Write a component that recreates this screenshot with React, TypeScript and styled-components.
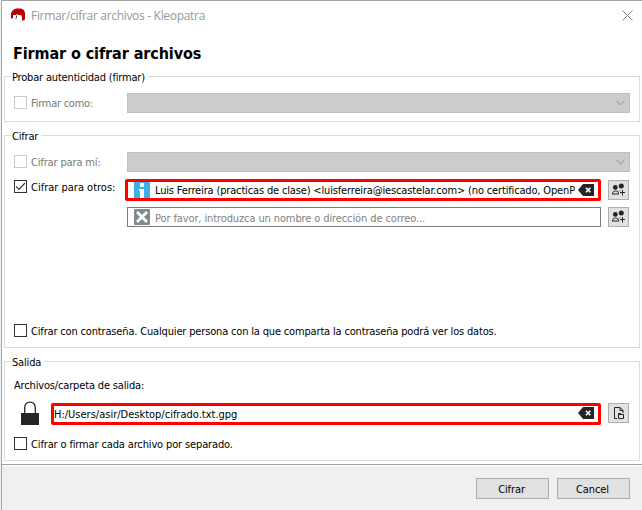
import React from "react";
import styled, { createGlobalStyle } from "styled-components";

const GlobalStyle = createGlobalStyle`
  * { box-sizing: border-box; }
  html, body { margin: 0; background: #f0f0f0; overflow: hidden; }
  svg { display: block; flex: none; }
`;

const Window = styled.div`
  width: 641px;
  height: 510px;
  margin-left: 1px;
  display: flex;
  flex-direction: column;
  background: #fff;
  border-top: 1px solid #a5a5a5;
  border-left: 1px solid #a5a5a5;
  font: 11px/13px "DejaVu Sans Condensed", "DejaVu Sans", sans-serif;
  color: #000;
  white-space: nowrap;
`;

const TitleBar = styled.header`
  height: 29px;
  padding: 0 9px;
  display: flex;
  align-items: center;
`;

const WindowTitle = styled.span`
  flex: 1;
  margin-left: 5px;
  font: 12px/16px "Open Sans", sans-serif;
  letter-spacing: -0.31px;
  color: #999;
`;

const Heading = styled.h1`
  height: 40px;
  margin: 0;
  padding: 14px 0 0 11px;
  font-size: 16px;
  line-height: 20px;
  font-weight: bold;
  letter-spacing: -0.1px;
`;

const Group = styled.fieldset<{ $height: number }>`
  width: 636px;
  height: ${(p) => p.$height}px;
  flex: none;
  margin: 0 0 7px 2px;
  padding: 0;
  border: 1px solid #dcdcdc;
`;

const Legend = styled.legend`
  height: 13px;
  margin-left: 6px;
  padding: 1px 3px 0 1px;
  letter-spacing: -0.18px;
`;

const Row = styled.div<{ $top: number; $height?: number }>`
  display: flex;
  align-items: center;
  height: ${(p) => p.$height ?? 20}px;
  margin-top: ${(p) => p.$top}px;
  padding-left: 9px;
`;

const Label = styled.label<{ $wide?: boolean; $disabled?: boolean; $raised?: number; $spacing?: number }>`
  width: ${(p) => (p.$wide ? "auto" : "113px")};
  flex: none;
  display: flex;
  align-items: center;
  gap: 4px;
  padding-bottom: ${(p) => p.$raised ?? 0}px;
  color: ${(p) => (p.$disabled ? "#787878" : "#000")};
  letter-spacing: ${(p) => p.$spacing ?? 0}px;
`;

const Caption = styled.span`
  margin-top: 2px;
`;

const Box = styled.span<{ $disabled?: boolean }>`
  width: 13px;
  height: 13px;
  border: 1px solid ${(p) => (p.$disabled ? "#ccc" : "#333")};
`;

const Combo = styled.div`
  width: 503px;
  height: 20px;
  display: flex;
  align-items: center;
  justify-content: flex-end;
  padding-right: 4px;
  background: #ccc;
  border: 1px solid #bfbfbf;
`;

const Field = styled.div`
  width: 474px;
  height: 20px;
  display: flex;
  align-items: center;
  padding-left: 6px;
  border: 1px solid #7a7a7a;
  color: #7f7f7f;
`;

const MarkedField = styled.div`
  height: 22px;
  display: flex;
  align-items: center;
  border: 3px solid #f00;
  border-radius: 2px;
`;

const RecipientField = styled(MarkedField)`
  width: 476px;
  margin-left: -2px;
  padding: 0 4px 0 6px;
`;

const OutputField = styled(MarkedField)`
  width: 550px;
  margin-top: 2px;
  padding: 0 4px 2px 0;
`;

const FieldText = styled.span<{ $spacing?: number; $indent?: number; $drop?: number }>`
  flex: 1;
  min-width: 0;
  overflow: hidden;
  margin-left: ${(p) => p.$indent ?? 0}px;
  margin-right: 3px;
  padding-top: ${(p) => p.$drop ?? 0}px;
  letter-spacing: ${(p) => p.$spacing ?? 0}px;
`;

const ToolButton = styled.button`
  width: 21px;
  height: 20px;
  margin: 0 0 0 7px;
  padding: 0;
  display: flex;
  align-items: center;
  justify-content: center;
  background: #e1e1e1;
  border: 1px solid #adadad;
`;

const LockSlot = styled.div`
  width: 37px;
  padding-left: 7px;
`;

const Footer = styled.footer`
  flex: 1;
  margin-top: -4px;
  padding: 12px 12px 0 0;
  display: flex;
  justify-content: flex-end;
  gap: 8px;
  background: #f0f0f0;
  border-top: 1px solid #a0a0a0;
  box-shadow: inset 0 1px #fff;
`;

const PushButton = styled.button`
  width: 73px;
  height: 21px;
  margin-top: 1px;
  padding: 2px 2px 0 0;
  font: inherit;
  letter-spacing: -0.1px;
  color: #000;
  background: #e1e1e1;
  border: 1px solid #adadad;
`;

const AppIcon = () => (
  <svg width="15" height="15" viewBox="0 0 15 15">
    <path d="M0 11V5l2-3 3-1.500h5L13 2l1 3v6l-1 1.500h-2L8 10H2z" fill="#b80000" />
    <path d="M2 7h3l1-1 1 1h3l1 2v3l-1 2H4l-2-3z" fill="#fff" />
    <path d="M5.500 7.500v2M4.500 10.500h1" stroke="#333" fill="none" />
    <path d="M2 13.500h2M9 13.500h2" stroke="#e6e6e6" />
  </svg>
);

const CloseIcon = () => (
  <svg width="11" height="11" viewBox="0 0 11 11">
    <path d="M.5.5l10 10M10.500.5l-10 10" stroke="#888" />
  </svg>
);

const Chevron = () => (
  <svg width="9" height="6" viewBox="0 0 9 6">
    <path d="M.5.8l4 4 4-4" fill="none" stroke="#a0a0a0" strokeWidth="1.100" />
  </svg>
);

const Tick = () => (
  <svg width="11" height="11" viewBox="0 0 11 11">
    <path d="M1 5.300l3 3L10 2" fill="none" stroke="#333" strokeWidth="1.200" />
  </svg>
);

const InfoIcon = () => (
  <svg width="16" height="16" viewBox="0 0 16 16">
    <path d="M0 0h16v16H0z" fill="#3daee9" />
    <path d="M6 1h4v4H6zM5 7h5v9H6V9H5z" fill="#fff" />
  </svg>
);

const UnknownIcon = () => (
  <svg width="16" height="16" viewBox="0 0 16 16">
    <rect width="16" height="16" rx="1" fill="#7f8c8d" />
    <path d="M3 3l10 10M13 3L3 13" stroke="#fff" strokeWidth="2.800" />
  </svg>
);

const ClearIcon = () => (
  <svg width="16" height="12" viewBox="0 0 16 12">
    <path d="M5 0h11v12H5L0 6z" fill="#232629" />
    <path d="M8 3.800l4.400 4.400M12.400 3.800L8 8.200" stroke="#fff" strokeWidth="1.600" />
  </svg>
);

const PeopleIcon = () => (
  <svg width="15" height="14" viewBox="0 0 15 14">
    <circle cx="4.300" cy="4.400" r="2.400" fill="#232629" />
    <circle cx="10.300" cy="3.100" r="2.500" fill="#232629" />
    <path d="M1.500 11c0-2 1-3 3-3s3 1 3 3M1 11h7M8 8.500l1-1M11.500 7v5.500M9 9.500h5" fill="none" stroke="#232629" />
  </svg>
);

const FileIcon = () => (
  <svg width="12" height="13" viewBox="0 0 12 13">
    <path d="M4 11.500H1.500V.5H7l3 3V6M7 .5v3h3" fill="none" stroke="#232629" />
    <path d="M5.500 7.500h5v4h-5zM5.500 8V6.500h2l1 1" fill="none" stroke="#232629" />
  </svg>
);

const LockIcon = () => (
  <svg width="18" height="24" viewBox="0 0 18 24">
    <path d="M3.700 12V7C3.700 3 5.800 1.100 9 1.100S14.300 3 14.300 7v5" fill="none" stroke="#232629" strokeWidth="1.300" />
    <path d="M0 12h18v12H0z" fill="#232629" />
  </svg>
);

export default function App() {
  return (
    <>
      <GlobalStyle />
      <Window>
        <TitleBar>
          <AppIcon />
          <WindowTitle>Firmar/cifrar archivos - Kleopatra</WindowTitle>
          <CloseIcon />
        </TitleBar>
        <Heading>Firmar o cifrar archivos</Heading>

        <Group $height={52}>
          <Legend>Probar autenticidad (firmar)</Legend>
          <Row $top={10}>
            <Label $disabled $raised={1} $spacing={-0.25}>
              <Box $disabled />
              <Caption>Firmar como:</Caption>
            </Label>
            <Combo><Chevron /></Combo>
          </Row>
        </Group>

        <Group $height={219}>
          <Legend>Cifrar</Legend>
          <Row $top={10}>
            <Label $disabled $raised={1} $spacing={-0.15}>
              <Box $disabled />
              <Caption>Cifrar para mí:</Caption>
            </Label>
            <Combo><Chevron /></Combo>
          </Row>
          <Row $top={7} $height={22}>
            <Label $raised={7}>
              <Box><Tick /></Box>
              <Caption>Cifrar para otros:</Caption>
            </Label>
            <RecipientField>
              <InfoIcon />
              <FieldText $spacing={-0.156} $indent={5}>
                Luis Ferreira (practicas de clase) &lt;luisferreira@iescastelar.com&gt; (no certificado, OpenP
              </FieldText>
              <ClearIcon />
            </RecipientField>
            <ToolButton><PeopleIcon /></ToolButton>
          </Row>
          <Row $top={6}>
            <Label />
            <Field>
              <UnknownIcon />
              <FieldText $spacing={-0.11} $indent={5} $drop={2}>
                Por favor, introduzca un nombre o dirección de correo...
              </FieldText>
            </Field>
            <ToolButton><PeopleIcon /></ToolButton>
          </Row>
          <Row $top={97} $height={13}>
            <Label $wide $spacing={-0.165}>
              <Box />
              <Caption>
                Cifrar con contraseña. Cualquier persona con la que comparta la contraseña podrá ver los datos.
              </Caption>
            </Label>
          </Row>
        </Group>

        <Group $height={106}>
          <Legend>Salida</Legend>
          <Row $top={11} $height={13}>
            <Label $wide $spacing={-0.16}>Archivos/carpeta de salida:</Label>
          </Row>
          <Row $top={9} $height={24}>
            <LockSlot><LockIcon /></LockSlot>
            <OutputField>
              <FieldText $drop={2}>H:/Users/asir/Desktop/cifrado.txt.gpg</FieldText>
              <ClearIcon />
            </OutputField>
            <ToolButton><FileIcon /></ToolButton>
          </Row>
          <Row $top={12} $height={13}>
            <Label $wide $spacing={-0.14}>
              <Box />
              <Caption>Cifrar o firmar cada archivo por separado.</Caption>
            </Label>
          </Row>
        </Group>

        <Footer>
          <PushButton>Cifrar</PushButton>
          <PushButton>Cancel</PushButton>
        </Footer>
      </Window>
    </>
  );
}
